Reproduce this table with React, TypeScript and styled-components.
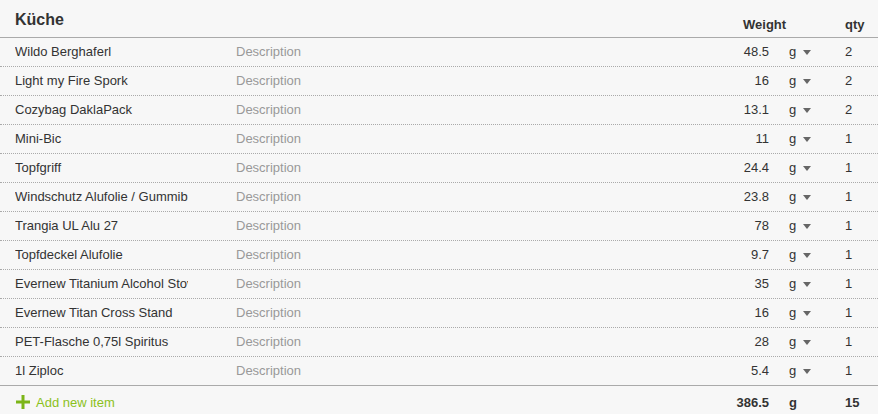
import React from "react";
import styled, { createGlobalStyle } from "styled-components";

const Global = createGlobalStyle`
  html, body { margin: 0; padding: 0; background: #f7f7f7; }
  body { font-family: "Liberation Sans", Arial, sans-serif; font-size: 13px; color: #333; }
`;

const cols = "15px 173px 48px 1fr 70px 20px 56px 33px";

const Table = styled.div`
  width: 878px;
  background: #f7f7f7;
`;

const HeaderRow = styled.div`
  display: grid;
  grid-template-columns: ${cols};
  height: 37px;
  border-bottom: 1px solid #aaa;
`;

const Title = styled.h2`
  grid-column: 2 / 5;
  margin: 0;
  padding-top: 11px;
  font-size: 16px;
  font-weight: bold;
  color: #333;
  line-height: 18px;
`;

const HeadLabel = styled.div<{ $col: string }>`
  grid-column: ${(p) => p.$col};
  align-self: end;
  padding-bottom: 5px;
  font-weight: bold;
  line-height: 15px;
  color: #333;
`;

const Row = styled.div<{ $last?: boolean }>`
  display: grid;
  grid-template-columns: ${cols};
  height: 27px;
  padding-bottom: 1px;
  align-items: center;
  line-height: 15px;
  border-bottom: 1px ${(p) => (p.$last ? "solid #aaa" : "dotted #aaa")};
`;

const Name = styled.div`
  grid-column: 2;
  white-space: nowrap;
  overflow: hidden;
  color: #333;
`;

const Desc = styled.div`
  grid-column: 4;
  color: #999;
  white-space: nowrap;
`;

const Weight = styled.div<{ $bold?: boolean }>`
  grid-column: 5;
  text-align: right;
  font-weight: ${(p) => (p.$bold ? "bold" : "normal")};
`;

const Unit = styled.div<{ $bold?: boolean }>`
  grid-column: 7;
  display: flex;
  align-items: center;
  font-weight: ${(p) => (p.$bold ? "bold" : "normal")};
`;

const Caret = styled.span`
  display: inline-block;
  margin-left: 7px;
  margin-top: 1px;
  width: 0;
  height: 0;
  border-left: 4px solid transparent;
  border-right: 4px solid transparent;
  border-top: 5px solid #666;
`;

const Qty = styled.div<{ $bold?: boolean }>`
  grid-column: 8;
  font-weight: ${(p) => (p.$bold ? "bold" : "normal")};
`;

const FooterRow = styled(Row)`
  border-bottom: none;
  height: 28px;
  padding-top: 2px;
  padding-bottom: 0;
`;

const AddLink = styled.a`
  grid-column: 2 / 4;
  display: flex;
  align-items: center;
  gap: 6px;
  color: #8bc11c;
  text-decoration: none;
  white-space: nowrap;
`;

const Plus = () => (
  <svg width="14" height="14" viewBox="0 0 14 14" style={{ marginLeft: 1 }}>
    <rect x="5.5" y="0" width="3" height="14" fill="#7cb518" />
    <rect x="0" y="5.5" width="14" height="3" fill="#7cb518" />
  </svg>
);

const items: [string, string, number][] = [
  ["Wildo Berghaferl", "48.5", 2],
  ["Light my Fire Spork", "16", 2],
  ["Cozybag DaklaPack", "13.1", 2],
  ["Mini-Bic", "11", 1],
  ["Topfgriff", "24.4", 1],
  ["Windschutz Alufolie / Gummiband", "23.8", 1],
  ["Trangia UL Alu 27", "78", 1],
  ["Topfdeckel Alufolie", "9.7", 1],
  ["Evernew Titanium Alcohol Stove", "35", 1],
  ["Evernew Titan Cross Stand", "16", 1],
  ["PET-Flasche 0,75l Spiritus", "28", 1],
  ["1l Ziploc", "5.4", 1],
];

export default function App() {
  return (
    <>
      <Global />
      <Table>
        <HeaderRow>
          <Title>Küche</Title>
          <HeadLabel $col="5 / 7">
            <span style={{ marginLeft: 44 }}>Weight</span>
          </HeadLabel>
          <HeadLabel $col="8">qty</HeadLabel>
        </HeaderRow>
        {items.map(([name, w, q], i) => (
          <Row key={i} $last={i === items.length - 1}>
            <Name>{name}</Name>
            <Desc>Description</Desc>
            <Weight>{w}</Weight>
            <Unit>
              g<Caret />
            </Unit>
            <Qty>{q}</Qty>
          </Row>
        ))}
        <FooterRow>
          <AddLink href="#">
            <Plus />
            Add new item
          </AddLink>
          <Weight $bold>386.5</Weight>
          <Unit $bold>g</Unit>
          <Qty $bold>15</Qty>
        </FooterRow>
      </Table>
    </>
  );
}
